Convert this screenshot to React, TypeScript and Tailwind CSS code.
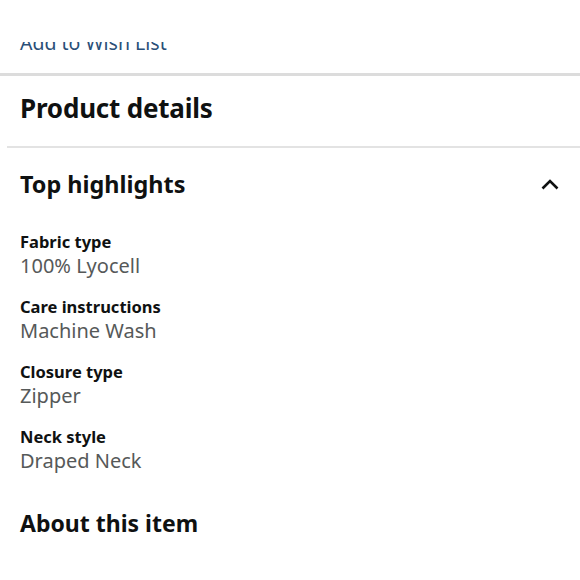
import React from 'react';

const highlights = [
  { label: 'Fabric type', value: '100% Lyocell' },
  { label: 'Care instructions', value: 'Machine Wash' },
  { label: 'Closure type', value: 'Zipper' },
  { label: 'Neck style', value: 'Draped Neck' },
];

function ChevronUp() {
  return (
    <svg width="18" height="12" viewBox="0 0 18 12" fill="none" className="shrink-0">
      <path d="M1.5 10.5 L9 3 L16.5 10.5" stroke="#0f1111" strokeWidth="2.6" />
    </svg>
  );
}

export default function App() {
  return (
    <div className="w-[580px] h-[580px] overflow-hidden bg-white font-['Noto_Sans',sans-serif] text-[#0f1111]">
      <div className="h-[42px]" />
      <div className="h-[31px] overflow-hidden px-[20px]">
        <div className="mt-[-12px] text-[19.5px] leading-[26px] text-[#2a4f78]">Add to Wish List</div>
      </div>
      <div className="h-[3px] bg-[#dcdcdc]" />

      {/* Product details header */}
      <div className="h-[70px] flex items-center px-[20px] pb-[6px]">
        <h2 className="text-[26px] font-bold leading-none tracking-[-0.2px]">Product details</h2>
      </div>
      <div className="ml-[7px] h-[2px] bg-[#e3e3e3]" />

      {/* Top highlights */}
      <div className="flex items-center justify-between pl-[20px] pr-[21px] pt-[22px]">
        <h3 className="text-[23.4px] font-bold leading-[28px]">Top highlights</h3>
        <ChevronUp />
      </div>

      <div className="flex flex-col gap-[17px] px-[20px] pt-[33px]">
        {highlights.map((h) => (
          <div key={h.label} className="flex flex-col">
            <span className="text-[16.5px] font-bold leading-[22px]">{h.label}</span>
            <span className="text-[20px] leading-[26px] text-[#565959]">{h.value}</span>
          </div>
        ))}
      </div>

      <div className="px-[20px] pt-[35px]">
        <h3 className="text-[23px] font-bold leading-[28px]">About this item</h3>
      </div>
    </div>
  );
}
